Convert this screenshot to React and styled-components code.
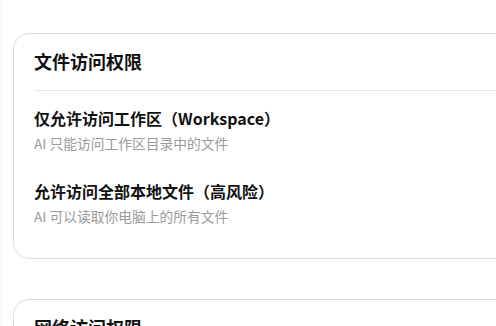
import React from "react";
import styled, { createGlobalStyle } from "styled-components";

const Global = createGlobalStyle`
  html, body { margin: 0; padding: 0; background: #fff; }
  body {
    font-family: "Noto Sans CJK SC", "Noto Sans", sans-serif;
    color: #111;
    overflow: hidden;
  }
`;

const Page = styled.div`
  width: 495px;
  height: 326px;
  box-sizing: border-box;
  border-left: 1px solid #f2f2f2;
  margin-left: 1px;
  padding: 33px 0 0 11px;
  display: flex;
  flex-direction: column;
  gap: 40px;
  overflow: hidden;
`;

const Card = styled.section`
  width: 520px;
  flex-shrink: 0;
  box-sizing: border-box;
  border: 1px solid #dcdcdc;
  border-radius: 16px;
  background: #fff;
  padding: 13px 20px 32px;
`;

const Title = styled.h2`
  margin: 0;
  font-size: 18px;
  font-weight: 700;
  line-height: 28px;
  padding-bottom: 15px;
  border-bottom: 1px solid #e6e6e6;
  color: #111;
`;

const List = styled.div`
  display: flex;
  flex-direction: column;
  gap: 26px;
  padding-top: 15px;
`;

const Item = styled.div`
  display: flex;
  flex-direction: column;
  gap: 3px;
`;

const ItemTitle = styled.div`
  font-size: 16px;
  font-weight: 700;
  line-height: 24px;
  color: #111;
`;

const ItemDesc = styled.div`
  font-size: 13.75px;
  line-height: 20px;
  color: #9a9a9a;
`;

export default function App() {
  return (
    <>
      <Global />
      <Page>
        <Card>
          <Title>文件访问权限</Title>
          <List>
            <Item>
              <ItemTitle>仅允许访问工作区（Workspace）</ItemTitle>
              <ItemDesc>AI 只能访问工作区目录中的文件</ItemDesc>
            </Item>
            <Item>
              <ItemTitle>允许访问全部本地文件（高风险）</ItemTitle>
              <ItemDesc>AI 可以读取你电脑上的所有文件</ItemDesc>
            </Item>
          </List>
        </Card>
        <Card>
          <Title>网络访问权限</Title>
        </Card>
      </Page>
    </>
  );
}
